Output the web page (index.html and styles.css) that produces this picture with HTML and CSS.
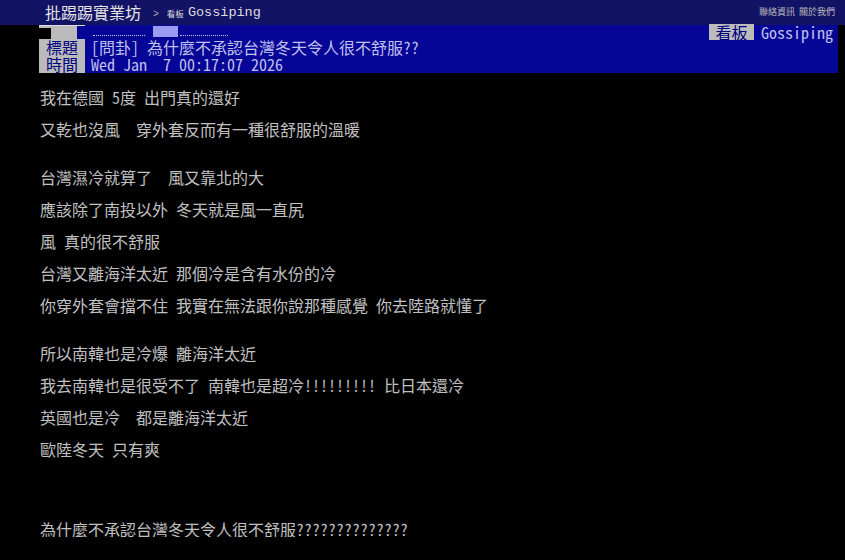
FILE: index.html
```html
<!DOCTYPE html>
<html>
<head>
  <meta charset="utf-8">
  <title>[問卦] 為什麼不承認台灣冬天令人很不舒服?? - 看板 Gossiping - 批踢踢實業坊</title>
  <link rel="stylesheet" href="styles.css">
</head>
<body>
  <div id="topbar">
    <div class="topbar-left">
      <a class="site" href="#">批踢踢實業坊</a>
      <span class="sep">&gt;</span>
      <a class="board" href="#"><span class="board-label">看板</span>Gossiping</a>
    </div>
    <div class="topbar-right">
      <a href="#">聯絡資訊</a>
      <a href="#">關於我們</a>
    </div>
  </div>

  <div id="main-content">
    <div class="article-meta">
      <div class="metaline author-row">
        <span class="author-tag"><span class="mask-black"></span><span class="mask-gray"></span></span>
        <span class="author-value">
          <span class="cut cut-id"></span><span class="mask-id"></span><span class="cut cut-nick"></span>
        </span>
        <span class="metaline-right">
          <span class="meta-tag">看板</span>
          <span class="meta-value">Gossiping</span>
        </span>
      </div>
      <div class="metaline">
        <span class="meta-tag">標題</span>
        <span class="meta-value">[問卦] 為什麼不承認台灣冬天令人很不舒服??</span>
      </div>
      <div class="metaline">
        <span class="meta-tag">時間</span>
        <span class="meta-value">Wed Jan  7 00:17:07 2026</span>
      </div>
    </div>
<pre class="article-body">

我在德國 5度 出門真的還好

又乾也沒風  穿外套反而有一種很舒服的溫暖


台灣濕冷就算了  風又靠北的大

應該除了南投以外 冬天就是風一直尻

風 真的很不舒服

台灣又離海洋太近 那個冷是含有水份的冷

你穿外套會擋不住 我實在無法跟你說那種感覺 你去陸路就懂了


所以南韓也是冷爆 離海洋太近

我去南韓也是很受不了 南韓也是超冷!!!!!!!!! 比日本還冷

英國也是冷  都是離海洋太近

歐陸冬天 只有爽




為什麼不承認台灣冬天令人很不舒服??????????????
</pre>
  </div>
</body>
</html>
```

FILE: styles.css
```css
body {
  margin: 0;
  background-color: #000;
  color: #bbb;
  font-family: "Noto Sans Mono CJK TC", "Liberation Mono", "Noto Sans CJK TC", monospace;
}

a {
  text-decoration: none;
}

#topbar {
  height: 25px;
  background-color: #131366;
  display: flex;
  align-items: center;
  justify-content: space-between;
  padding: 0 10px 0 45px;
}

.topbar-left {
  display: flex;
  align-items: center;
}

.site {
  color: #e4e4e4;
  font-family: "Noto Sans CJK TC", sans-serif;
  font-size: 16px;
  line-height: 25px;
}

.sep {
  color: #aaa;
  font-family: "Liberation Sans", sans-serif;
  font-size: 10px;
  margin: 2px 8px 0 12px;
}

.board {
  color: #ddd;
  font-family: "Liberation Mono", monospace;
  font-size: 13.5px;
  display: flex;
  align-items: center;
}

.board-label {
  font-family: "Noto Sans CJK TC", sans-serif;
  font-size: 8.5px;
  margin-right: 4px;
}

.topbar-right {
  display: flex;
  align-items: center;
  gap: 4px;
  margin-top: -2px;
  font-family: "Noto Sans CJK TC", sans-serif;
  font-size: 9px;
  line-height: 12px;
}

.topbar-right a {
  color: #bbb;
}

#main-content {
  margin: 0 7px 0 39px;
}

.article-meta {
  background-color: #050596;
}

.metaline {
  display: flex;
  height: 17px;
  line-height: 17px;
  font-size: 16px;
}

.meta-tag {
  background-color: #bbb;
  color: #000080;
  width: 46px;
  text-align: center;
}

.meta-value {
  color: #c0c0ee;
  margin-left: 6px;
  white-space: pre;
}

/* 捲動後被上方工具列蓋住的作者列 */
.author-row {
  height: 14px;
  line-height: 14px;
}

.author-tag {
  display: flex;
  width: 46px;
  height: 13px;
  border-top: 1px solid #ddd;
}

.mask-black {
  width: 12px;
  background-color: #000;
  border-top: 2px solid #bbb;
}

.mask-gray {
  width: 26px;
  background-color: #bbb;
}

.author-value {
  display: flex;
  align-items: flex-end;
  margin-left: 8px;
  height: 13px;
}

.cut {
  height: 2px;
  margin-bottom: 2px;
  border-bottom: 1px dotted #c0c0ee;
}

.cut-id {
  width: 52px;
}

.cut-nick {
  width: 48px;
}

.mask-id {
  width: 25px;
  height: 11px;
  background-color: #9a9af0;
  margin: 0 2px 1px 8px;
}

.metaline-right {
  margin-left: auto;
  margin-right: 5px;
  margin-top: -1px;
  display: flex;
  height: 16px;
  line-height: 16px;
}

.metaline-right .meta-tag {
  width: 45px;
}

.metaline-right .meta-value {
  margin-left: 7px;
}

.article-body {
  margin: 0;
  padding-left: 1px;
  font-family: "Noto Sans Mono CJK TC", "Liberation Mono", "Noto Sans CJK TC", monospace;
  font-size: 16px;
  line-height: 16px;
  color: #c0c0c0;
  white-space: pre;
}
```
